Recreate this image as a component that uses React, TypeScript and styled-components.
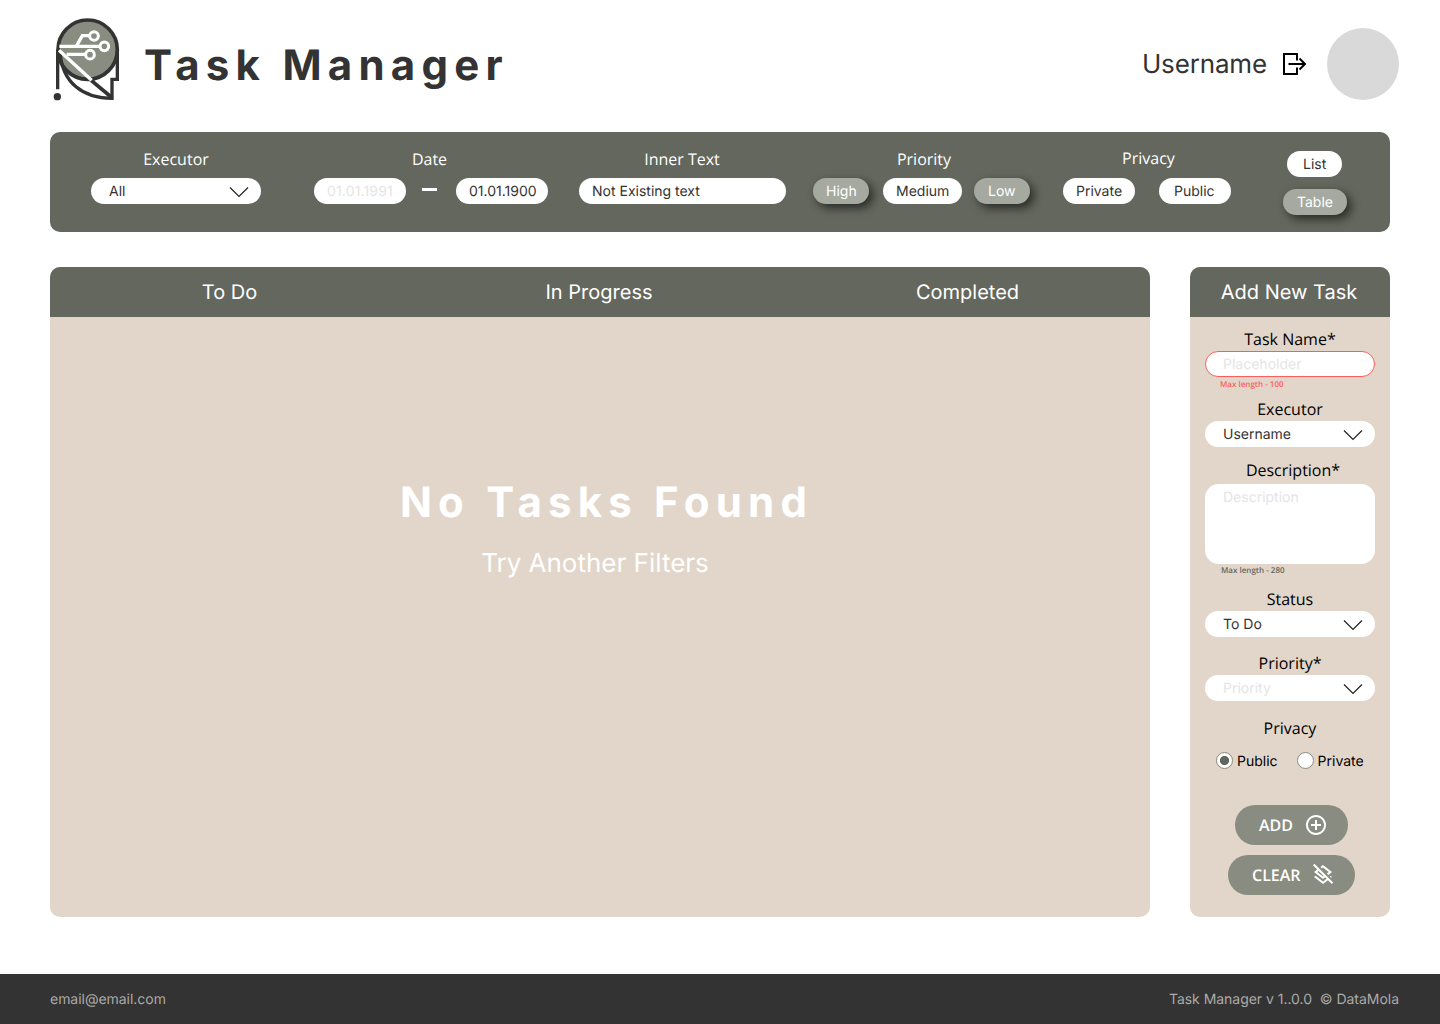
import React from 'react';
import styled, { createGlobalStyle } from 'styled-components';
import { MdOutlineLayersClear, MdControlPoint } from 'react-icons/md';

const Global = createGlobalStyle`
  * { box-sizing: border-box; }
  body {
    margin: 0;
    background: #fff;
    font-family: Inter, sans-serif;
    text-rendering: geometricPrecision;
    -webkit-font-smoothing: antialiased;
  }
`;

const Page = styled.div`
  width: 1440px;
  height: 1024px;
  display: flex;
  flex-direction: column;
  color: #333;
`;

const Header = styled.header`
  height: 132px;
  padding: 0 41px 0 53px;
  display: flex;
  align-items: flex-start;
`;

const Logo = styled.svg`
  width: 68px;
  height: 84px;
  margin-top: 17px;
`;

const Title = styled.h1`
  margin: 39px 0 0 23px;
  font-size: 42px;
  line-height: 54px;
  font-weight: 700;
  letter-spacing: 6.25px;
  white-space: nowrap;
`;

const User = styled.div`
  margin: 28px 0 0 auto;
  height: 72px;
  display: flex;
  align-items: center;
`;

const UserName = styled.span`
  padding-top: 2px;
  font-size: 26px;
  line-height: 32px;
  letter-spacing: -0.15px;
`;

const ExitIcon = styled.svg`
  width: 26px;
  height: 24px;
  margin: 0 19px 0 15px;
`;

const Avatar = styled.div`
  width: 72px;
  height: 72px;
  border-radius: 50%;
  background: #d9d9d9;
`;

const Filters = styled.section`
  height: 100px;
  margin: 0 50px;
  padding: 16px 0 0 41px;
  display: flex;
  align-items: flex-start;
  border-radius: 10px;
  background: #64675d;
`;

const Group = styled.div<{ $width: number; $before?: number }>`
  width: ${(p) => p.$width}px;
  margin-left: ${(p) => p.$before ?? 0}px;
`;

const GroupLabel = styled.div<{ $shift?: number; $raise?: number }>`
  height: 22px;
  margin: ${(p) => -(p.$raise ?? 0)}px 0 ${(p) => 8 + (p.$raise ?? 0)}px;
  padding-left: ${(p) => Math.max(0, p.$shift ?? 0)}px;
  padding-right: ${(p) => Math.max(0, -(p.$shift ?? 0))}px;
  font: 400 16px/22px 'Open Sans', sans-serif;
  text-align: center;
  color: #fff;
`;

const Controls = styled.div`
  display: flex;
  align-items: center;
  justify-content: space-between;
`;

const Pill = styled.div<{ $width: number; $active?: boolean; $muted?: boolean; $left?: number; $before?: number }>`
  width: ${(p) => p.$width}px;
  height: 26px;
  margin-left: ${(p) => p.$before ?? 0}px;
  padding: 1px 0 0 ${(p) => p.$left ?? 13}px;
  border-radius: 13px;
  background: ${(p) => (p.$active ? '#a5a99f' : '#fff')};
  color: ${(p) => (p.$active ? '#fff' : p.$muted ? '#e5e5e5' : '#333')};
  box-shadow: ${(p) => (p.$active ? '4px 4px 10px rgba(0, 0, 0, 0.6)' : 'none')};
  font-size: 14px;
  line-height: 26px;
  letter-spacing: ${(p) => (p.$muted ? 0.15 : 0)}px;
  white-space: nowrap;
`;

const Dash = styled.div`
  width: 15px;
  height: 3px;
  margin: 0 3px 3px 0;
  background: #fff;
`;

const ViewSwitch = styled.div`
  width: 64px;
  margin: 3px 0 0 52px;
  display: flex;
  flex-direction: column;
  gap: 12px;
`;

const Select = styled.div<{ $muted?: boolean; $invalid?: boolean }>`
  width: 170px;
  height: 26px;
  padding: 2px 12px 0 ${(p) => (p.$invalid ? 17 : 18)}px;
  display: flex;
  align-items: center;
  justify-content: space-between;
  border: ${(p) => (p.$invalid ? '1px solid #ff5d5d' : '0')};
  border-radius: 13px;
  background: #fff;
  color: ${(p) => (p.$muted ? '#e5e5e5' : '#333')};
  font-size: 14px;
  line-height: 24px;
`;

const Arrow = styled.svg`
  width: 20px;
  height: 12px;
`;

const Main = styled.main`
  height: 650px;
  margin: 35px 50px 0;
  display: flex;
  justify-content: space-between;
`;

const Board = styled.section`
  width: 1100px;
  border-radius: 10px;
  overflow: hidden;
  background: #e2d6ca;
`;

const BoardHead = styled.div`
  height: 50px;
  display: grid;
  grid-template-columns: 359px 380px 357px;
  align-items: center;
  background: #64675d;
  color: #fff;
  font-size: 20px;
  text-align: center;
`;

const Empty = styled.div`
  width: 1113px;
  padding-top: 159px;
  text-align: center;
  color: #fff;
`;

const EmptyTitle = styled.h2`
  margin: 0;
  font-size: 42px;
  line-height: 54px;
  font-weight: 700;
  letter-spacing: 6.2px;
`;

const EmptyText = styled.p`
  margin: 18px 23px 0 0;
  font-size: 26px;
  line-height: 32px;
`;

const Side = styled.aside`
  width: 200px;
  border-radius: 10px;
  overflow: hidden;
  background: #e2d6ca;
`;

const SideHead = styled.div`
  height: 50px;
  padding-right: 2px;
  background: #64675d;
  color: #fff;
  font-size: 20px;
  line-height: 50px;
  text-align: center;
`;

const Form = styled.div`
  padding: 11px 15px 0;
  display: flex;
  flex-direction: column;
`;

const Field = styled.div<{ $height: number }>`
  height: ${(p) => p.$height}px;
`;

const Label = styled.div<{ $after?: number; $shift?: number }>`
  height: 22px;
  margin-bottom: ${(p) => p.$after ?? 1}px;
  padding-left: ${(p) => p.$shift ?? 0}px;
  font: 400 16px/22px 'Open Sans', sans-serif;
  color: #000;
  text-align: center;
`;

const Area = styled.div`
  height: 80px;
  padding: 2px 18px;
  border-radius: 14px;
  background: #fff;
  color: #e5e5e5;
  font-size: 14px;
  line-height: 24px;
`;

const Hint = styled.div<{ $error?: boolean }>`
  padding: ${(p) => (p.$error ? 2 : 1)}px 0 0 ${(p) => (p.$error ? 15 : 16)}px;
  font: 600 8px/11px 'Open Sans', sans-serif;
  color: ${(p) => (p.$error ? '#ff5d5d' : '#64675d')};
`;

const Radios = styled.div`
  display: flex;
  height: 18px;
  margin: 0 -10px 0 11px;
  align-items: center;
  color: #000;
  font-size: 14px;
`;

const Radio = styled.span<{ $on?: boolean }>`
  flex: none;
  width: 17px;
  height: 17px;
  margin-right: 4px;
  border: 1px solid #898c80;
  border-radius: 50%;
  background: ${(p) => (p.$on ? 'radial-gradient(circle, #64675d 4.2px, #fff 5px)' : '#fff')};
`;

const RadioText = styled.span`
  margin-right: 19px;
  padding-top: 2px;
`;

const Action = styled.button<{ $width: number; $top: number; $shift: number }>`
  width: ${(p) => p.$width}px;
  height: 40px;
  margin: ${(p) => p.$top}px 0 0 ${(p) => p.$shift}px;
  padding: 0 20px 0 24px;
  display: flex;
  align-items: center;
  justify-content: space-between;
  border: 0;
  border-radius: 20px;
  background: #898c80;
  color: #fff;
  font: 600 16px/22px 'Open Sans', sans-serif;
  text-rendering: inherit;
`;

const Footer = styled.footer`
  height: 50px;
  margin-top: auto;
  padding: 1px 41px 0 50px;
  display: flex;
  align-items: center;
  justify-content: space-between;
  background: #333;
  color: #aaa;
  font-size: 14px;
  letter-spacing: -0.03px;
  white-space: pre;
`;

const Chevron = () => (
  <Arrow viewBox="0 0 20 12" fill="none" stroke="#222" strokeWidth="1.2">
    <path d="M1 1.5 L10 10.5 L19 1.5" />
  </Arrow>
);

export default function App() {
  return (
    <Page>
      <Global />
      <Header>
        <Logo viewBox="39 21 204 252" fill="none">
          <circle cx="143" cy="119" r="89" fill="#898c80" stroke="#333" strokeWidth="11" />
          <path d="M53 119V238M232 119V208H216V265C130 265 66 220 60 124" stroke="#333" strokeWidth="10" />
          <path d="M150 208L217 264" stroke="#333" strokeWidth="11" />
          <path d="M57 121L155 211" stroke="#fff" strokeWidth="10" />
          <path d="M58 109H180M80 133H136M110 107L127 77H148" stroke="#fff" strokeWidth="10" />
          <circle cx="162" cy="78" r="13" stroke="#fff" strokeWidth="9" />
          <circle cx="193" cy="109" r="13" stroke="#fff" strokeWidth="9" />
          <circle cx="150" cy="134" r="13" stroke="#fff" strokeWidth="9" />
          <circle cx="52" cy="260" r="11" fill="#333" />
        </Logo>
        <Title>Task Manager</Title>
        <User>
          <UserName>Username</UserName>
          <ExitIcon viewBox="0 0 26 24" fill="none" stroke="#000" strokeWidth="2">
            <path d="M15 8.5V2H2V22H15V15.5M6.500 12H23M17.500 6.500L23 12L17.500 17.500" />
          </ExitIcon>
          <Avatar />
        </User>
      </Header>

      <Filters>
        <Group $width={170}>
          <GroupLabel>Executor</GroupLabel>
          <Select>All<Chevron /></Select>
        </Group>
        <Group $width={234} $before={53}>
          <GroupLabel $shift={-3}>Date</GroupLabel>
          <Controls>
            <Pill $width={92} $muted>01.01.1991</Pill>
            <Dash />
            <Pill $width={92}>01.01.1900</Pill>
          </Controls>
        </Group>
        <Group $width={207} $before={31}>
          <GroupLabel $shift={-1}>Inner Text</GroupLabel>
          <Pill $width={207}>Not Existing text</Pill>
        </Group>
        <Group $width={217} $before={27}>
          <GroupLabel $shift={5}>Priority</GroupLabel>
          <Controls>
            <Pill $width={56} $active>High</Pill>
            <Pill $width={79} $before={2}>Medium</Pill>
            <Pill $width={56} $active $left={14}>Low</Pill>
          </Controls>
        </Group>
        <Group $width={168} $before={33}>
          <GroupLabel $shift={3} $raise={1}>Privacy</GroupLabel>
          <Controls>
            <Pill $width={72}>Private</Pill>
            <Pill $width={72} $left={15}>Public</Pill>
          </Controls>
        </Group>
        <ViewSwitch>
          <Pill $width={55} $left={16} $before={4}>List</Pill>
          <Pill $width={64} $left={14} $active>Table</Pill>
        </ViewSwitch>
      </Filters>

      <Main>
        <Board>
          <BoardHead>
            <span>To Do</span>
            <span>In Progress</span>
            <span>Completed</span>
          </BoardHead>
          <Empty>
            <EmptyTitle>No Tasks Found</EmptyTitle>
            <EmptyText>Try Another Filters</EmptyText>
          </Empty>
        </Board>
        <Side>
          <SideHead>Add New Task</SideHead>
          <Form>
            <Field $height={70}>
              <Label>Task Name*</Label>
              <Select $invalid $muted>Placeholder</Select>
              <Hint $error>Max length - 100</Hint>
            </Field>
            <Field $height={61}>
              <Label>Executor</Label>
              <Select>Username<Chevron /></Select>
            </Field>
            <Field $height={129}>
              <Label $after={3} $shift={6}>Description*</Label>
              <Area>Description</Area>
              <Hint>Max length - 280</Hint>
            </Field>
            <Field $height={64}>
              <Label>Status</Label>
              <Select>To Do<Chevron /></Select>
            </Field>
            <Field $height={65}>
              <Label>Priority*</Label>
              <Select $muted>Priority<Chevron /></Select>
            </Field>
            <Field $height={88}>
              <Label $after={12}>Privacy</Label>
              <Radios>
                <Radio $on /><RadioText>Public</RadioText>
                <Radio /><RadioText>Private</RadioText>
              </Radios>
            </Field>
            <Action $width={113} $top={0} $shift={30}>ADD<MdControlPoint size={24} /></Action>
            <Action $width={127} $top={10} $shift={23}>CLEAR<MdOutlineLayersClear size={24} /></Action>
          </Form>
        </Side>
      </Main>

      <Footer>
        <span>email@email.com</span>
        <span>Task Manager v 1..0.0  © DataMola</span>
      </Footer>
    </Page>
  );
}
